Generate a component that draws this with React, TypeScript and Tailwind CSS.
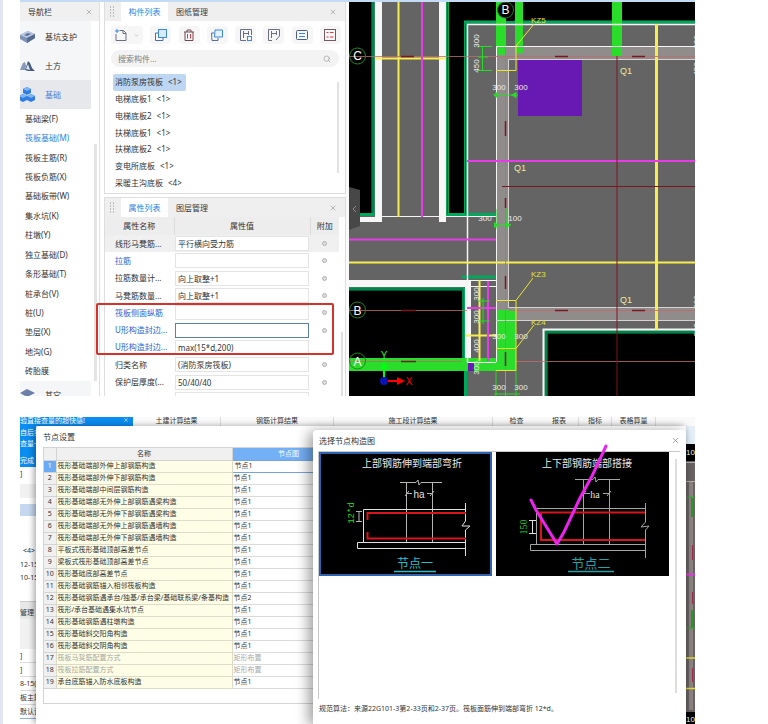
import type { ReactNode } from "react";
import { X, Search, ChevronDown } from "lucide-react";

const NAV_ITEMS = [
  "基础梁(F)",
  "筏板基础(M)",
  "筏板主筋(R)",
  "筏板负筋(X)",
  "基础板带(W)",
  "集水坑(K)",
  "柱墩(Y)",
  "独立基础(D)",
  "条形基础(T)",
  "桩承台(V)",
  "桩(U)",
  "垫层(X)",
  "地沟(G)",
  "砖胎膜",
];

const COMPONENTS = [
  { name: "消防泵房筏板", count: 1 },
  { name: "电梯底板1", count: 1 },
  { name: "电梯底板2", count: 1 },
  { name: "扶梯底板1", count: 1 },
  { name: "扶梯底板2", count: 1 },
  { name: "变电所底板", count: 1 },
  { name: "采暖主沟底板", count: 4 },
];

const PROPS = [
  { name: "线形马凳筋...", value: "平行横向受力筋", dot: true, gray: true },
  { name: "拉筋", value: "", dot: true, blue: true },
  { name: "拉筋数量计...", value: "向上取整+1", dot: true },
  { name: "马凳筋数量...", value: "向上取整+1", dot: true },
  { name: "筏板侧面纵筋", value: "", dot: true, blue: true },
  { name: "U形构造封边...", value: "", dot: true, blue: true, focus: true },
  { name: "U形构造封边...", value: "max(15*d,200)", blue: true },
  { name: "归类名称", value: "(消防泵房筏板)", dot: true },
  { name: "保护层厚度(...", value: "50/40/40", dot: true },
  { name: "", value: "", dot: false },
];

const NODES: [string, string][] = [
  ["筏形基础端部外伸上部钢筋构造", "节点1"],
  ["筏形基础端部外伸下部钢筋构造", "节点1"],
  ["筏形基础端部中间层钢筋构造", "节点1"],
  ["筏形基础端部无外伸上部钢筋遇梁构造", "节点1"],
  ["筏形基础端部无外伸下部钢筋遇梁构造", "节点1"],
  ["筏形基础端部无外伸上部钢筋遇墙构造", "节点1"],
  ["筏形基础端部无外伸下部钢筋遇墙构造", "节点1"],
  ["平板式筏形基础顶部高差节点", "节点1"],
  ["梁板式筏形基础顶部高差节点", "节点1"],
  ["筏形基础底部高差节点", "节点1"],
  ["筏形基础钢筋锚入相邻筏板构造", "节点1"],
  ["筏形基础钢筋遇承台/独基/承台梁/基础联系梁/条基构造", "节点2"],
  ["筏形/承台基础遇集水坑节点", "节点1"],
  ["筏形基础钢筋遇柱墩构造", "节点1"],
  ["筏形基础斜交阳角构造", "节点1"],
  ["筏形基础斜交阴角构造", "节点1"],
  ["筏板马凳筋配置方式", "矩形布置"],
  ["筏板拉筋配置方式", "矩形布置"],
  ["承台底筋锚入防水底板构造", "节点1"],
];

function PanelTabs({ active, other }: { active: string; other: string }) {
  return (
    <div className="flex h-[19px] shrink-0 items-stretch bg-[#efefef]">
      <svg viewBox="0 0 16 18" className="w-4" fill="#8d8d8d">
        {[4, 7, 10, 13].map((y) => (
          <g key={y}>
            <rect x="5" y={y} width="1" height="1" />
            <rect x="8" y={y} width="1" height="1" />
          </g>
        ))}
      </svg>
      <button className="w-[47px] bg-white text-[#2f80dc]">{active}</button>
      <button className="w-[48px] text-[#3a3a3a]">{other}</button>
      <button aria-label="关闭" className="mr-1 ml-auto w-3">
        <X size={8} strokeWidth={2} color="#999" />
      </button>
    </div>
  );
}

function ToolButton({ label, children }: { label: string; children: ReactNode }) {
  return (
    <button
      aria-label={label}
      className="flex h-[18px] w-[21px] items-center justify-center rounded-sm bg-[#f6f6f6]"
    >
      <svg viewBox="0 0 12 12" className="size-3" fill="none" strokeWidth="1">
        {children}
      </svg>
    </button>
  );
}

function NavPanel() {
  return (
    <nav className="flex w-[80px] shrink-0 flex-col border-r border-[#dcdfe6] bg-white">
      <div className="flex h-[19px] shrink-0 items-center justify-between bg-[#f0f0f0] pr-1.5 pl-2">
        <span>导航栏</span>
        <button aria-label="关闭">
          <X size={8} color="#999" />
        </button>
      </div>
      <div className="mr-[8px] flex shrink-0 flex-col bg-[#f5f6f8]">
        <button className="flex h-[30px] items-center gap-[10px] pt-[2px]">
          <svg viewBox="0 0 15 14" className="h-[14px] w-[15px]">
            <path d="M0 5 8 1 15 4 15 8 7 13 0 9z" fill="#7f93b8" />
            <path d="M0 5 8 1 15 4 7 8z" fill="#b9c8e0" />
            <path d="M4 5 8 3 11 4 7 6z" fill="#5d7198" />
            <path d="M7 8V13L15 8V4z" fill="#566a92" />
          </svg>
          <span>基坑支护</span>
        </button>
        <button className="flex h-[29px] items-center gap-[10px]">
          <svg viewBox="0 0 15 14" className="h-[14px] w-[15px]">
            <path d="M0 11 3 4 5 3 6 7 5 11z" fill="#8798ba" />
            <path d="M5 11 8 2 10 4 12 9 15 12 8 12z" fill="#455a80" />
            <path d="M6 10 8 5 10 11z" fill="#dfe6f2" />
          </svg>
          <span>土方</span>
        </button>
        <button className="flex h-[29px] items-center gap-[10px] bg-[#e6e8ec] text-[#3f82dc]">
          <svg viewBox="0 0 15 16" className="h-[16px] w-[15px]">
            {[
              [7, 4],
              [3, 11],
              [11, 11],
            ].map(([x, y]) => (
              <g key={`${x}-${y}`} transform={`translate(${x} ${y})`}>
                <path d="M0-4 4-2V2L0 4-4 2V-2z" fill="#2f7de0" />
                <path d="M0-4 4-2 0 0-4-2z" fill="#7db4f4" />
              </g>
            ))}
          </svg>
          <span>基础</span>
        </button>
      </div>
      <div className="flex shrink-0">
        <ul className="flex h-[272px] flex-1 flex-col">
          {NAV_ITEMS.map((t, i) => (
            <li key={t} className="flex flex-1 items-center pl-[5px]">
              <a href="#nav" className={i === 1 ? "text-[#2486e0]" : ""}>
                {t}
              </a>
            </li>
          ))}
        </ul>
        <div className="mt-[35px] mr-[2px] w-[3px] bg-[#e4e4e4]" />
      </div>
      <button className="mr-[8px] flex h-[27px] shrink-0 items-center gap-[10px] bg-[#f5f6f8]">
        <svg viewBox="0 0 15 16" className="h-[16px] w-[15px]">
          <path d="M0 11 7 8 15 11 7 15z" fill="#9fb0cc" />
          <path d="M0 6 7 2 15 6 7 10z" fill="#6b80a8" />
        </svg>
        <span>其它</span>
      </button>
    </nav>
  );
}

function ComponentPanel() {
  return (
    <section className="flex shrink-0 flex-col border border-t-0 border-[#dedede] bg-white pb-[2px]">
      <PanelTabs active="构件列表" other="图纸管理" />
      <div className="mt-[5px] flex items-center justify-between pr-[4px] pl-[6px]">
        <button aria-label="新建" className="flex h-[18px] w-[32px] items-center justify-between rounded-sm bg-[#f6f6f6] px-1">
          <svg viewBox="0 0 12 12" className="size-3" fill="none">
            <path d="M4.500 1.500H8.500L11 4V11.500H1V5" stroke="#6a7080" />
            <path d="M8 1.500V4.500H11" stroke="#6a7080" />
            <path d="M2 0V4M0 2H4" stroke="#3b87e2" />
          </svg>
          <ChevronDown size={5} color="#888" />
        </button>
        <ToolButton label="复制">
          <path d="M3 4H.5V11.500H8V9" stroke="#4d6fa8" />
          <rect x="3.500" y=".5" width="8" height="8" fill="#d9eafc" stroke="#3b87e2" />
        </ToolButton>
        <ToolButton label="删除">
          <path d="M1 3H11M4 3V1H8V3M2 3V11.500H10V3" stroke="#6e4a52" />
          <path d="M4.500 5V9.500M7.500 5V9.500" stroke="#d43c46" />
        </ToolButton>
        <ToolButton label="层间复制">
          <path d="M3 4H.5L1 11.500H7V9" stroke="#5a6f98" />
          <path d="M4 1H11.500V8H3.500z" fill="#e6f1fd" stroke="#3b87e2" />
        </ToolButton>
        <ToolButton label="存档">
          <path d="M.5 11.500V.5H11.500V6M.5 11.500H6M3.500 2V9M3.500 4.500H8.500M8.500 2V6" stroke="#6a7080" />
          <rect x="7.500" y="7.500" width="4" height="4" stroke="#3b87e2" />
        </ToolButton>
        <ToolButton label="提取">
          <path d="M4 11.500H.5V.5H11.500V7M3.500 2V9M3.500 4.500H8.500M8.500 2V6M11.500 7 8 11" stroke="#6a7080" />
        </ToolButton>
        <ToolButton label="属性">
          <rect x=".5" y="1.500" width="11" height="9" rx="1" stroke="#4d5f80" />
          <path d="M3 4.500H9M3 7.500H9" stroke="#3b87e2" />
        </ToolButton>
        <ToolButton label="列表">
          <rect x=".5" y=".5" width="11" height="11" stroke="#6e5a60" />
          <path d="M2.500 3.500H4.500M2.500 8H4.500M6 3.500H9.500M6 8H9.500" stroke="#d43c46" />
        </ToolButton>
      </div>
      <label className="mt-[6px] mr-[6px] ml-[6px] flex h-[17px] items-center rounded-full bg-[#f3f3f3] pr-2 pl-[7px]">
        <input
          type="text"
          aria-label="搜索构件"
          placeholder="搜索构件..."
          className="min-w-0 flex-1 bg-transparent outline-none placeholder:text-[#808080]"
        />
        <Search size={8} color="#999" />
      </label>
      <div className="mt-[7px] flex justify-between pr-[6px] pl-2">
        <ul className="flex h-[117px] flex-col items-start">
          {COMPONENTS.map((c, i) => (
            <li
              key={c.name}
              className={
                i === 0
                  ? "flex flex-1 items-center gap-[5px] rounded-xs bg-[#bdd6f1] pr-1 pl-[2px] whitespace-nowrap"
                  : "flex flex-1 items-center gap-[5px] pl-[2px] whitespace-nowrap"
              }
            >
              <span>{c.name}</span>
              <span>&lt;{c.count}&gt;</span>
            </li>
          ))}
        </ul>
        <div className="mt-2 mb-[18px] w-[2px] bg-[#e2e2e2]" />
      </div>
    </section>
  );
}

function PropertyPanel() {
  return (
    <section className="mt-[3px] flex flex-1 shrink-0 flex-col border border-b-0 border-[#dedede] bg-white">
      <PanelTabs active="属性列表" other="图层管理" />
      <div className="relative flex">
        <table className="h-[191px] flex-1 table-fixed border-collapse text-left">
          <thead>
            <tr className="h-[18px] bg-[#ededed]">
              <th className="w-[69px] border-r border-[#dcdcdc] text-center font-normal">属性名称</th>
              <th className="border-r border-[#dcdcdc] text-center font-normal">属性值</th>
              <th className="w-[29px] text-center font-normal">附加</th>
            </tr>
          </thead>
          <tbody>
            {PROPS.map((p, i) => (
              <tr key={i} className={p.gray ? "bg-[#f0f0f0]" : ""}>
                <td className={p.blue ? "p-0 pl-[10px] whitespace-nowrap text-[#2c62d4]" : "p-0 pl-[10px] whitespace-nowrap"}>
                  {p.name}
                </td>
                <td className="px-[1px] py-0">
                  <input
                    type="text"
                    aria-label={p.name || "属性值"}
                    defaultValue={p.value}
                    className={
                      p.focus
                        ? "block h-[15px] w-full border border-[#5a7fb8] bg-white pl-[2px] outline-none"
                        : "block h-[15px] w-full border border-[#e4e4e4] bg-white pl-[2px] outline-none"
                    }
                  />
                </td>
                <td className="p-0">
                  {p.dot && (
                    <input
                      type="checkbox"
                      aria-label={`附加 ${p.name}`}
                      className="mx-auto block size-[5px] appearance-none rounded-full border border-[#b4b4b4] bg-[#dcdcdc]"
                    />
                  )}
                </td>
              </tr>
            ))}
          </tbody>
        </table>
        <div className="mt-[115px] mr-[2px] ml-[2px] w-[2px] bg-[#e0e0e0]" />
        <div className="pointer-events-none absolute top-[86px] right-[11px] -left-[9px] h-[52px] rounded-xs border-2 border-[#d5322c]" />
      </div>
    </section>
  );
}

const DIMS: [number, number, string][] = [
  [499, 90, "300"],
  [521, 90, "300"],
  [485, 221, "300"],
  [515, 221, "100"],
  [499, 339, "300"],
  [521, 339, "300"],
  [499, 390, "300"],
  [521, 390, "300"],
];

const V_DIMS: [number, number, string][] = [
  [479, 41, "300"],
  [479, 66, "450"],
  [479, 294, "300"],
  [479, 317, "300"],
  [479, 346, "400"],
  [479, 368, "300"],
  [699, 42, "300"],
  [699, 69, "450"],
  [699, 302, "300"],
  [699, 330, "300"],
];

function Drawing() {
  return (
    <div className="min-w-0 flex-1 bg-[#646464]">
      <svg viewBox="349 2 346 394" preserveAspectRatio="xMinYMin slice" className="h-full w-full" fontFamily="'Liberation Sans', sans-serif">
        <rect x="349" y="0" width="346" height="396" fill="#646464" />
        {/* pits outside the slab */}
        <g fill="#000">
          <rect x="349" y="0" width="24" height="214" />
          <rect x="447" y="0" width="19" height="214" />
          <rect x="449" y="0" width="246" height="22" />
          <rect x="349" y="289" width="115" height="107" />
          <rect x="547" y="332" width="148" height="64" />
        </g>
        <g fill="none" stroke="#00a85c" strokeWidth="3">
          <path d="M349 214.500H373V0" />
          <path d="M496 214.500H447.500V0" />
          <path d="M465.500 214V22H695" />
          <path d="M349 289H463.500V360" />
          <path d="M463.500 278V277H496" />
          <path d="M465.500 370V396" />
          <path d="M546 396V332H695" />
        </g>
        <g fill="none" stroke="#00603a" strokeWidth="1">
          <path d="M373 0V213M447.500 0V214M465.500 23V214M349 289H463V358M546 396V332H695" />
        </g>
        <g fill="#f7f7f7">
          <rect x="375" y="0" width="7" height="222" />
          <rect x="439" y="0" width="7" height="222" />
          <rect x="360" y="217" width="22" height="5" />
          <rect x="349" y="280" width="122" height="7" />
          <rect x="465" y="280" width="6" height="82" />
        </g>
        {/* walls */}
        <rect x="496" y="47" width="199" height="12" fill="#918c8c" />
        <rect x="496" y="47" width="13" height="263" fill="#918c8c" />
        <rect x="496" y="307" width="199" height="13" fill="#918c8c" />
        <g fill="#2add2a">
          <rect x="496" y="0" width="10" height="55" />
          <rect x="515" y="0" width="8" height="53" />
          <rect x="612" y="0" width="10" height="56" />
          <rect x="349" y="358" width="147" height="13" />
          <rect x="496" y="310" width="20" height="61" />
        </g>
        <rect x="506" y="0" width="8" height="21" fill="#000" />
        <rect x="518" y="60" width="64" height="56" fill="#6819b4" />
        <rect x="468" y="363" width="6" height="8" fill="#6819b4" />
        <g fill="none" stroke="#f4f4f4" strokeWidth="1">
          <path d="M467.500 362V24.500H695" strokeWidth="1.500" />
          <path d="M382 216.500H496M471 286.500H496M471 280.500H496M467 362.500H496" />
          <path d="M496.500 362V46.500H695" />
          <path d="M695 59.500H508.500V307.500H695M496 320.500H695" stroke="#d6d2d2" />
          <path d="M543.500 396V329.500H695" strokeWidth="2" />
        </g>
        <g fill="none" stroke="#f5ee4e" strokeWidth="2">
          <path d="M398.500 0V217M375 58.500H446M349 262.500H695M479.500 280V361M465 335.500H496" />
          <path d="M656.500 24V330" strokeWidth="3" />
        </g>
        <g fill="none" stroke="#e63be6" strokeWidth="2">
          <path d="M422 0V217M349 239.500H496M467 161H695M488 281V361M467 308H496" />
        </g>
        {/* axis lines */}
        <g fill="none" stroke="#c06a6a" strokeWidth="1">
          <path d="M349 56.500H695M349 310.500H467M509 310.500H695M349 361.500H462M516 361.500H695M505.500 47V370" opacity=".8" />
        </g>
        <g fill="none" stroke="#7e1620" strokeWidth="1">
          <path d="M502 186.500H695M617 56V396" />
          <path d="M401 56.500H414M555 56.500H568M632 56.500H645M505.500 121V136M505.500 198V208M505.500 276V289M401 310.500H416M555 310.500H568M632 310.500H645M401 361.500H416M505.500 352V366" strokeWidth="1.500" />
        </g>
        <g fill="none" stroke="#e9e62c" strokeWidth="1">
          <path d="M496 70.500H516V46L534 24M516 348.500 534 325M496 300.500H516V370.500H496M496 348.500H516M516 300.500 533 278" />
        </g>
        <g fill="none" stroke="#27dc27" strokeWidth="1">
          <path d="M482.500 46V71M478 46.500H492M478 57H488M478 70.500H492M494 95H518M496 92V98M516 92V98M495 225H511M497 209V229M507 208V229M478 301H490M478 321H490M483 298V324M496 371V396M505.500 371V396M516 371V396M494 394H520" />
          <path d="M493 95 498 92V98zM511 95 516 92V98zM499 225 494 222V228zM511 225 506 222V228z" fill="#27dc27" stroke="none" />
        </g>
        <g fill="#ececec" fontSize="8" textAnchor="middle">
          {DIMS.map(([x, y, t]) => (
            <text key={`${x}-${y}`} x={x} y={y}>
              {t}
            </text>
          ))}
          {V_DIMS.map(([x, y, t]) => (
            <text key={`${x}-${y}`} transform={`translate(${x} ${y}) rotate(-90)`}>
              {t}
            </text>
          ))}
        </g>
        <g fill="#ecec9c" fontSize="9">
          <text x="514" y="171">Q1</text>
          <text x="620" y="74">Q1</text>
          <text x="620" y="303">Q1</text>
        </g>
        <g fill="#e2e228" fontSize="8">
          <text x="531" y="23">KZ5</text>
          <text x="531" y="277">KZ3</text>
          <text x="531" y="325">KZ4</text>
        </g>
        <circle cx="505.500" cy="10" r="8" fill="#000" stroke="#187a18" />
        <g fill="none" stroke="#1c8c1c">
          <circle cx="357.500" cy="56" r="8" />
          <circle cx="357.500" cy="310" r="8" />
          <circle cx="357.500" cy="361" r="8" />
        </g>
        <g fill="#fff" fontSize="12" textAnchor="middle">
          <text x="505.500" y="14">B</text>
          <text x="357.500" y="60">C</text>
          <text x="357.500" y="315">B</text>
          <text x="357.500" y="366">A</text>
        </g>
        {/* UCS marker */}
        <path d="M384 381V366" stroke="#00ff10" strokeWidth="2" />
        <path d="M384 361 388 369H380z" fill="#00ff10" />
        <path d="M384 381H398" stroke="#f00" strokeWidth="2" />
        <path d="M405 381 397 377V385z" fill="#f00" />
        <circle cx="384" cy="381" r="4" fill="#0814b8" />
        <g fontSize="10" textAnchor="middle">
          <text x="384" y="359" fill="#2cf02c">Y</text>
          <text x="409" y="385" fill="#f00">X</text>
        </g>
        <path d="M349 187 360 190V226L349 230z" fill="#474747" />
        <path d="M356 206 353 209 356 212" fill="none" stroke="#8c8c8c" />
      </svg>
    </div>
  );
}

function NodeOne() {
  return (
    <svg viewBox="319 452 173 124" className="min-w-0 flex-1 bg-black outline-2 -outline-offset-2 outline-[#2d62ac]">
      <text x="412" y="467" fill="#e8e8e8" fontSize="10" textAnchor="middle" fontFamily="'Noto Sans CJK SC', sans-serif">
        上部钢筋伸到端部弯折
      </text>
      <g fill="none" stroke="#b5b5b5" strokeWidth="1">
        <path d="M400 482.500H416L418 480 419 485 421 482.500H442M406.500 482V542M432.500 482V542" />
        <path d="M406 493.500H412M427 493.500H432M405 496 409 491M430 496 434 491" />
        <path d="M466 509.500H363.500V542M466 542.500H357.500V548.500H466" stroke="#e0e0e0" />
        <path d="M465.500 503V521L462 526H470L465.500 530V556" stroke="#e0e0e0" />
        <path d="M359 512V521M356 511.500H362M356 521.500H362" />
      </g>
      <path d="M367.500 520V513H466M367.500 532V538.500H466" fill="none" stroke="#d8141e" strokeWidth="2" />
      <text x="419" y="498" fill="#e0e0e0" fontSize="10" textAnchor="middle" fontFamily="'Liberation Sans', sans-serif">ha</text>
      <text transform="translate(354 513) rotate(-90)" fill="#22d622" fontSize="9" textAnchor="middle" fontFamily="'Liberation Mono', monospace">12*d</text>
      <text x="415" y="568" fill="#25c3c9" fontSize="12" textAnchor="middle" fontFamily="'Noto Sans CJK SC', sans-serif">节点一</text>
      <path d="M394 571.500H436" stroke="#25c3c9" strokeWidth="1.500" />
    </svg>
  );
}

function NodeTwo() {
  return (
    <svg viewBox="496 452 173 124" className="min-w-0 flex-1 overflow-visible bg-black">
      <text x="587" y="467" fill="#e8e8e8" fontSize="10" textAnchor="middle" fontFamily="'Noto Sans CJK SC', sans-serif">
        上下部钢筋端部搭接
      </text>
      <g fill="none" stroke="#a5a5a5" strokeWidth="1">
        <path d="M575 479.500H593L595 477 596 482 598 479.500H620M583.500 479V544M609.500 479V544" />
        <path d="M584 493.500H590M603 493.500H609M582 496 586 491M607 496 611 491" />
        <path d="M645 508.500H536.500V544M645 544.500H530.500V550.500H645" />
        <path d="M645.500 503V522L641 527 649 526 645.500 530V558" />
        <path d="M532.500 520V534M529 520.500H536M529 533.500H536" stroke="#e0e0e0" />
      </g>
      <path d="M645 512.500H541V540H645" fill="none" stroke="#d8141e" strokeWidth="2" />
      <text x="595" y="498" fill="#e0e0e0" fontSize="10" textAnchor="middle" fontFamily="'Liberation Serif', serif">ha</text>
      <text transform="translate(527 527) rotate(-90)" fill="#22d622" fontSize="10" textAnchor="middle" fontFamily="'Liberation Serif', serif">150</text>
      <text x="591" y="568" fill="#25a3a9" fontSize="13" textAnchor="middle" fontFamily="'Noto Sans CJK SC', sans-serif">节点二</text>
      <path d="M568 571.500H614" stroke="#25a3a9" strokeWidth="1.500" />
      <path d="M531 500 536 510 557 544 564 532 580 498 592 476 600 459 606 446" fill="none" stroke="#ee22ee" strokeWidth="3" strokeLinecap="round" strokeLinejoin="round" />
    </svg>
  );
}

function NodeDialog() {
  return (
    <div className="absolute inset-y-0 top-[9px] right-[9px] left-[16px] overflow-hidden rounded-tl-sm bg-white pt-[6px] pl-[7px] shadow-[-2px_0_6px_rgba(0,0,0,0.35)]">
      <h2 className="h-[15px] text-[8px] leading-[10px]">节点设置</h2>
      <div className="h-[257px] w-[303px] border border-[#d4d4d4]">
        <table className="w-full table-fixed border-collapse text-[7px] leading-[8px]">
          <thead>
            <tr className="h-3 bg-[#f0f0f0]">
              <th className="w-3 border border-t-0 border-l-0 border-[#d4d4d4]" />
              <th className="w-[176px] border border-t-0 border-[#d4d4d4] p-0 text-center font-normal">名称</th>
              <th className="bg-[#74b0f6] p-0 text-center font-normal text-white">节点图</th>
            </tr>
          </thead>
          <tbody>
            {NODES.map(([name, node], i) => {
              const muted = node === "矩形布置";
              return (
                <tr key={i} className="h-3">
                  <td
                    className={
                      i === 0
                        ? "border-b border-[#d4d4d4] bg-[#6aabf5] p-0 text-center text-white"
                        : "border-b border-[#d4d4d4] bg-[#f0f0f0] p-0 text-center"
                    }
                  >
                    {i + 1}
                  </td>
                  <td
                    className={
                      muted
                        ? "border border-[#dcdcc8] bg-[#fefee6] p-0 pl-[1px] whitespace-nowrap text-[#a8a8a0]"
                        : "border border-[#dcdcc8] bg-[#fefee6] p-0 pl-[1px] whitespace-nowrap"
                    }
                  >
                    {name}
                  </td>
                  <td
                    className={
                      i === 0
                        ? "border border-[#74a4dc] p-0 pl-[2px]"
                        : muted
                          ? "border border-[#dcdcdc] p-0 pl-[1px] text-[#a8a8a8]"
                          : "border border-[#dcdcdc] p-0 pl-[1px]"
                    }
                  >
                    {node}
                  </td>
                </tr>
              );
            })}
          </tbody>
        </table>
      </div>
    </div>
  );
}

function PickerDialog() {
  return (
    <div className="absolute top-[13px] right-[9px] bottom-0 left-[293px] flex flex-col rounded-t-sm bg-white pl-[5px] shadow-[-4px_2px_14px_rgba(0,0,0,0.4)]">
      <div className="flex h-[21px] items-center justify-between pr-1.5 pl-px">
        <h2 className="text-[8px]">选择节点构造图</h2>
        <button aria-label="关闭">
          <X size={9} color="#888" />
        </button>
      </div>
      <div className="mr-[6px] flex h-[248px] border-t border-l border-[#c8c8c8]">
        <div className="flex h-[124px] flex-1 gap-1">
          <NodeOne />
          <NodeTwo />
        </div>
        <div className="mt-[7px] mr-[3px] mb-[6px] ml-[6px] w-[2px] bg-[#dedede]" />
      </div>
      <p className="mt-[5px] pl-px text-[7px] leading-[10px]">
        规范算法：来源22G101-3第2-33页和2-37页。筏板面筋伸到端部弯折 12*d。
      </p>
    </div>
  );
}

function Behind() {
  return (
    <div className="flex h-full flex-col text-[7px] leading-[8px] text-[#333]">
      <div className="flex h-[9px] bg-[#fafafa] text-center">
        <div className="flex w-[113px] justify-between bg-[#0a8cf0] pr-1 whitespace-nowrap text-white">
          <span>验直接查量的超快感!</span>
          <X size={6} />
        </div>
        <span className="w-[88px] border-r border-[#ddd]">土建计算结果</span>
        <span className="w-[113px] border-r border-[#ddd]">钢筋计算结果</span>
        <span className="w-[159px] border-r border-[#ddd]">施工段计算结果</span>
        <span className="w-[47px]">检查</span>
        <span className="w-[39px] border-r border-[#ddd]">报表</span>
        <span className="w-[33px] border-r border-[#ddd]">指标</span>
        <span className="w-[44px] border-r border-[#ddd]">表格算量</span>
      </div>
      <div className="flex flex-1 justify-between bg-[#e6f0fb]">
        <div className="w-4 overflow-hidden bg-white whitespace-nowrap">
          <div className="h-[41px] bg-[#0a8cf0] pt-[3px] text-white">
            <p className="h-[11px]">自后实</p>
            <p className="h-[17px]">查量~</p>
            <p>完成</p>
          </div>
          <p className="h-[17px] pt-[3px]">]</p>
          <div className="h-[14px] bg-[#f1f1f1]" />
          <div className="mt-[6px] h-[12px] bg-[#c5d8ef]" />
          <p className="mt-[31px] pl-[3px]">&lt;4&gt;</p>
          <p className="mt-[6px]">12-15</p>
          <p className="mt-[5px]">10-15</p>
          <div className="mt-[19px] h-[18px] border-t border-[#ccc] bg-[#e8e8e8] pt-[7px]">管理</div>
          <div className="h-[30px] bg-[#f1f1f1]" />
          <p className="h-[14px] border-b border-[#ddd] pt-[3px]">]</p>
          <p className="h-[14px] border-b border-[#ddd] pt-[3px]">]</p>
          <p className="h-[14px] border-b border-[#ddd] pt-[3px]">8-15(</p>
          <p className="h-[14px] border-b border-[#ddd] pt-[3px]">板主筋</p>
          <p className="h-[14px] border-b border-[#8fb0e0] pt-[3px]">默认计</p>
        </div>
        <svg viewBox="686 444 9 280" className="mt-[18px] h-[280px] w-[9px]">
          <rect x="686" y="444" width="9" height="280" fill="#6a6464" />
          <rect x="686" y="444" width="9" height="17" fill="#000" />
          <rect x="686" y="712" width="9" height="12" fill="#000" />
          <path d="M691 482V710" stroke="#8e8484" strokeWidth="4" />
          <path d="M692.500 545V560M692.500 592V604M692.500 668V682" stroke="#a02c4c" />
          <path d="M686 462.500H695M686 481.500H695" stroke="#b8b0b0" />
          <path d="M687 497.500H695M687 628H695" stroke="#28b428" strokeWidth="1" />
          <path d="M692 498V517M692 610V628" stroke="#289a28" strokeWidth="2" />
          <path d="M686 574.500H695" stroke="#e63be6" strokeWidth="2" />
          <path d="M686 658H695M686 688.500H695" stroke="#e4da40" strokeWidth="1.500" />
          <g fill="#fff" fontSize="8" fontFamily="'Liberation Sans', sans-serif">
            <text x="686" y="455">10</text>
            <text x="686" y="722">10</text>
          </g>
        </svg>
      </div>
    </div>
  );
}

export default function App() {
  return (
    <div className="min-h-screen border-l-[3px] border-[#e3e5f3] bg-white pr-[73px] pl-[17px] font-['Noto_Sans','Noto_Sans_CJK_SC',sans-serif] text-[8px] leading-[12px] text-[#333]">
      <main className="flex h-[396px] overflow-hidden border-t-2 border-[#c3dcf3]">
        <NavPanel />
        <div className="ml-[4px] flex w-[242px] shrink-0 flex-col">
          <ComponentPanel />
          <PropertyPanel />
        </div>
        <div className="w-[3px] shrink-0 bg-[#fafafa]" />
        <Drawing />
      </main>
      <section className="relative mt-[21px] h-[307px] overflow-hidden">
        <Behind />
        <NodeDialog />
        <PickerDialog />
      </section>
    </div>
  );
}
